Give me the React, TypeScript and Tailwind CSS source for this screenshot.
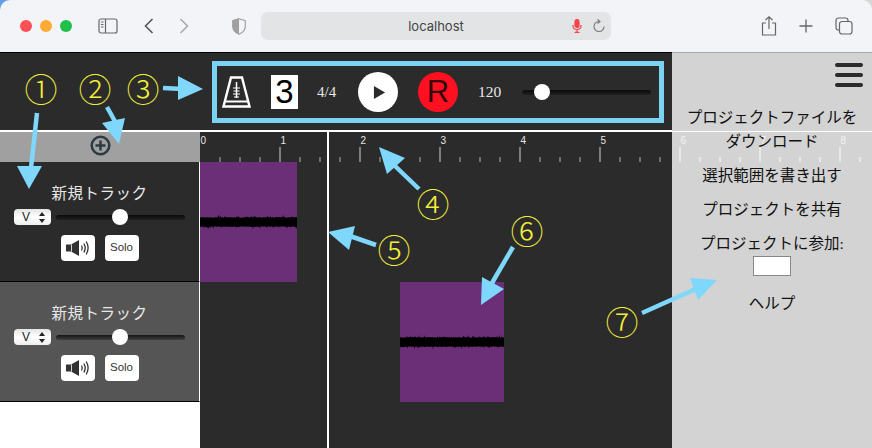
import React from "react";

const serif = "font-['Liberation_Serif','Noto_Sans_CJK_JP',serif]";
const sans = "font-['Liberation_Sans',sans-serif]";

function wavePath(width: number, seed: number) {
  let s = seed;
  const rnd = () => {
    s = (s * 9301 + 49297) % 233280;
    return s / 233280;
  };
  let top = "M0 8";
  let bottom = "";
  for (let x = 0; x <= width; x += 0.5) {
    const spike = rnd() > 0.92 ? 1 + rnd() * 1.5 : 0;
    top += ` L${x} ${(8 - 4.2 - rnd() * 1.0 - spike).toFixed(1)}`;
    const spike2 = rnd() > 0.92 ? 1 + rnd() * 1.5 : 0;
    bottom = ` L${x} ${(8 + 4.2 + rnd() * 1.0 + spike2).toFixed(1)}` + bottom;
  }
  return top + bottom + " Z";
}

function Clip({ className, width, seed }: { className: string; width: number; seed: number }) {
  return (
    <div className={`h-[120px] bg-[#6b2f78] flex items-center ${className}`}>
      <svg width={width} height="16" viewBox={`0 0 ${width} 16`} preserveAspectRatio="none">
        <path d={wavePath(width, seed)} fill="#000" />
      </svg>
    </div>
  );
}

function Slider({ width, thumb }: { width: string; thumb: string }) {
  return (
    <div className={`relative h-4 flex items-center ${width}`}>
      <div className="h-[5px] w-full rounded-full bg-gradient-to-b from-[#000000c0] to-[#00000040]" />
      <div className={`absolute top-0 w-4 h-4 rounded-full bg-white ${thumb}`} />
    </div>
  );
}

function Track({ bg }: { bg: string }) {
  return (
    <div className={`h-[120px] flex flex-col items-center border-b border-b-black border-r border-r-white ${bg}`}>
      <div className={`mt-[21px] h-[22px] leading-[22px] text-[15.5px] tracking-[0.5px] text-[#e8e8e8] ${serif}`}>新規トラック</div>
      <div className="mt-[4px] flex items-center gap-[5px] w-[171px]">
        <div className={`w-[37px] h-4 rounded-[4px] bg-gradient-to-b from-[#e4e4e4] via-white to-[#eee] flex items-center justify-between pl-[8px] pr-[6px] text-[12px] text-[#222] ${sans}`}>
          <span>V</span>
          <svg width="6" height="11" viewBox="0 0 6 11" fill="#222">
            <path d="M3 0 L6 4 H0 Z M3 11 L0 7 H6 Z" />
          </svg>
        </div>
        <Slider width="w-[129px]" thumb="left-[56px]" />
      </div>
      <div className="mt-[10px] flex gap-[10px]">
        <div className="w-[34px] h-[26px] rounded-[4px] bg-white flex items-center justify-center">
          <svg width="26" height="18" viewBox="0 0 26 18" fill="none">
            <path d="M1 5.5 H6 L14 1 V17 L6 12.5 H1 Z" fill="#333" />
            <path d="M6.5 5.5 V12.5" stroke="#fff" strokeWidth="0.8" />
            <path d="M16.5 6.5 Q18 9 16.5 11.5" stroke="#333" strokeWidth="1.3" />
            <path d="M18.8 4.5 Q21.6 9 18.8 13.5" stroke="#333" strokeWidth="1.3" />
            <path d="M21.2 2.5 Q25 9 21.2 15.5" stroke="#333" strokeWidth="1.3" />
          </svg>
        </div>
        <div className={`w-[34px] h-[26px] rounded-[4px] bg-white flex items-center justify-center text-[11.5px] text-[#333] ${sans}`}>Solo</div>
      </div>
    </div>
  );
}

function Ruler() {
  const ticks = [];
  for (let i = 1; i <= 33; i++) {
    const x = i * 20;
    const major = i % 4 === 0;
    const inPanel = x >= 472;
    ticks.push(
      <rect
        key={i}
        x={x - 0.75}
        y={major ? 16 : 26}
        width="1.5"
        height={major ? 15 : 5}
        fill={inPanel ? "#f0f0f0" : major ? "#9a9a9a" : "#858585"}
      />
    );
  }
  const labels = [0, 1, 2, 3, 4, 5, 6, 7, 8];
  return (
    <svg width="672" height="31" className="absolute left-0 top-0 overflow-visible">
      <rect x="0" y="0" width="672" height="1" fill="#fff" />
      {ticks}
      {labels.map((n) => (
        <text
          key={n}
          x={n * 80 + 0.5}
          y="13"
          fontSize="10"
          fontFamily="Liberation Sans"
          fill={n * 80 >= 472 ? "#f4f4f4" : "#e6e6e6"}
        >
          {n}
        </text>
      ))}
    </svg>
  );
}

const marks = [
  { t: "①", c: "left-[41px] top-[88px]" },
  { t: "②", c: "left-[95px] top-[88px]" },
  { t: "③", c: "left-[143px] top-[88px]" },
  { t: "④", c: "left-[433px] top-[203px]" },
  { t: "⑤", c: "left-[394px] top-[249px]" },
  { t: "⑥", c: "left-[527px] top-[230px]" },
  { t: "⑦", c: "left-[622px] top-[321px]" },
];

const arrows = [
  { l: "37,113 31,168", h: "17,166 42,166 29,189" },
  { l: "107,107 117,125", h: "102,123 125,118 119,144" },
  { l: "163,88 183,89", h: "178,76 203,89 178,100" },
  { l: "419,189 395,166", h: "379,147 405,158 387,174" },
  { l: "376,245 350,236", h: "328,232 355,226 349,250" },
  { l: "513,247 492,283", h: "482,277 504,289 481,305" },
  { l: "642,313 700,287", h: "690,278 717,280 698,300" },
];

function Annotations() {
  return (
    <>
      <svg width="872" height="448" className="absolute left-0 top-0 z-20 pointer-events-none">
        {arrows.map((a, i) => (
          <g key={i}>
            <polyline points={a.l} stroke="#7fd8fb" strokeWidth="4.5" fill="none" />
            <polygon points={a.h} fill="#7fd8fb" />
          </g>
        ))}
      </svg>
      {marks.map((m) => (
        <span
          key={m.t}
          className={`absolute z-20 -translate-x-1/2 -translate-y-1/2 text-[33px] leading-none text-[#f4ee3a] font-['Noto_Sans_CJK_JP',sans-serif] font-light ${m.c}`}
        >
          {m.t}
        </span>
      ))}
    </>
  );
}

function BrowserChrome() {
  return (
    <div className="h-[52px] rounded-t-[10px] bg-[#f3f4f7] flex items-center">
      <div className="ml-[20px] flex gap-[8px]">
        <div className="w-3 h-3 rounded-full bg-[#fb5058]" />
        <div className="w-3 h-3 rounded-full bg-[#fdab33]" />
        <div className="w-3 h-3 rounded-full bg-[#1fc14a]" />
      </div>
      <svg className="ml-[26px]" width="20" height="16" viewBox="0 0 20 16" fill="none" stroke="#666" strokeWidth="1.2">
        <rect x="1" y="1" width="18" height="14" rx="2" />
        <path d="M7.5 1 V15" />
        <path d="M3 4 H5.5 M3 6.5 H5.5 M3 9 H5.5" strokeWidth="1" />
      </svg>
      <svg className="ml-[26px]" width="10" height="16" viewBox="0 0 10 16" fill="none" stroke="#555" strokeWidth="1.6">
        <path d="M8.5 1 L1.5 8 L8.5 15" />
      </svg>
      <svg className="ml-[25px]" width="10" height="16" viewBox="0 0 10 16" fill="none" stroke="#aaa" strokeWidth="1.6">
        <path d="M1.5 1 L8.5 8 L1.5 15" />
      </svg>
      <svg className="ml-[43px]" width="14" height="17" viewBox="0 0 14 17">
        <path d="M7 0.7 L13.3 2.6 V8 C13.3 12 10.5 14.8 7 16.3 C3.5 14.8 0.7 12 0.7 8 V2.6 Z" fill="#f3f4f7" stroke="#a0a0a0" strokeWidth="1.2" />
        <path d="M7 0.7 L0.7 2.6 V8 C0.7 12 3.5 14.8 7 16.3 Z" fill="#a0a0a0" />
      </svg>
      <div className={`ml-[15px] w-[350px] h-[28px] pt-[1px] rounded-[7px] bg-[#e3e4e6] flex items-center relative justify-center text-[13px] text-[#444] font-['Inter',sans-serif]`}>
        localhost
        <div className="absolute right-[6px] top-[7px] flex items-center gap-[11px]">
          <svg width="10" height="14" viewBox="0 0 10 14" fill="none" stroke="#f4444a" strokeWidth="1.2">
            <rect x="3" y="0.5" width="4" height="8" rx="2" fill="#f4444a" />
            <path d="M1 6 V7 C1 9.5 3 10.5 5 10.5 C7 10.5 9 9.5 9 7 V6 M5 10.5 V13 M2.5 13.3 H7.5" />
          </svg>
          <svg width="12" height="14" viewBox="0 0 12 14" fill="none" stroke="#777" strokeWidth="1.1">
            <path d="M6 2.5 A5 5 0 1 0 11 7.5" />
            <path d="M4.5 0.5 L7 2.5 L4.5 4.5" />
          </svg>
        </div>
      </div>
      <svg className="ml-[150px]" width="16" height="20" viewBox="0 0 16 20" fill="none" stroke="#666" strokeWidth="1.2">
        <path d="M5 7 H1.5 V19 H14.5 V7 H11" />
        <path d="M8 13 V1 M4.5 4 L8 0.8 L11.5 4" />
      </svg>
      <svg className="ml-[22px]" width="14" height="14" viewBox="0 0 14 14" stroke="#666" strokeWidth="1.3">
        <path d="M7 0.5 V13.5 M0.5 7 H13.5" />
      </svg>
      <svg className="ml-[22px]" width="18" height="18" viewBox="0 0 18 18" fill="#f3f4f7" stroke="#666" strokeWidth="1.2">
        <rect x="1" y="1" width="12" height="12" rx="2.5" />
        <rect x="4.5" y="4.5" width="12.5" height="12.5" rx="2.5" />
      </svg>
    </div>
  );
}

function Transport() {
  return (
    <div className="h-[79px] bg-[#2b2b2b] border-t border-t-black border-b border-b-white flex items-center pl-[212px] pt-[1px]">
      <div className="w-[452px] h-[62px] border-[5px] border-[#7bd3f3] flex items-center pl-[5px]">
        <svg width="29" height="32" viewBox="0 0 29 32" fill="none" stroke="#fff" strokeWidth="2.4">
          <path d="M9 1.5 H20 L27.5 30.5 H1.5 Z" />
          <path d="M3 25.5 H26" strokeWidth="2" />
          <path d="M14.5 6 V22" strokeWidth="1.5" />
          <path d="M11 12 H18 M11.5 15 H17.5 M11 18 H18 M12 21 H17" strokeWidth="1.1" />
        </svg>
        <div className={`ml-[20px] w-[27px] h-[34px] bg-white flex items-center justify-center text-[33px] text-black ${sans}`}>3</div>
        <div className={`ml-[19px] w-[21px] text-[15px] text-[#e8e8e8] ${serif}`}>4/4</div>
        <div className="ml-[20px] w-10 h-10 rounded-full bg-white flex items-center justify-center">
          <svg className="ml-[3px]" width="13" height="15" viewBox="0 0 14 16" fill="#2b2b2b">
            <path d="M1 1 L13 8 L1 15 Z" />
          </svg>
        </div>
        <div className={`ml-[20px] w-10 h-10 rounded-full bg-[#ff1020] flex items-center justify-center text-[31px] text-[#33070c] ${sans}`}>R</div>
        <div className={`ml-[20px] w-[24px] text-[15.5px] text-[#e8e8e8] ${serif}`}>120</div>
        <div className="ml-[20px]">
          <Slider width="w-[129px]" thumb="left-[12px]" />
        </div>
      </div>
    </div>
  );
}

function Panel() {
  const cls = `text-[15.5px] leading-[24px] text-[#111] text-center ${serif}`;
  return (
    <aside className="w-[200px] bg-[#d3d3d3] border-t border-t-[#aaa] flex flex-col items-center">
      <div className="self-end mt-[10px] mr-[9px] w-[28px] flex flex-col gap-[6px]">
        <div className="h-[4px] rounded-full bg-[#2b2b2b]" />
        <div className="h-[4px] rounded-full bg-[#2b2b2b]" />
        <div className="h-[4px] rounded-full bg-[#2b2b2b]" />
      </div>
      <div className={`mt-[19px] ${cls}`}>
        プロジェクトファイルを
        <br />
        ダウンロード
      </div>
      <div className={`mt-[10px] ${cls}`}>選択範囲を書き出す</div>
      <div className={`mt-[10px] ${cls}`}>プロジェクトを共有</div>
      <div className={`mt-[10px] ${cls}`}>プロジェクトに参加:</div>
      <div className="w-[38px] h-[20px] bg-white border border-[#888]" />
      <div className={`mt-[16px] ${cls}`}>ヘルプ</div>
    </aside>
  );
}

export default function App() {
  return (
    <div className="relative w-[872px] h-[448px] overflow-hidden flex flex-col bg-gradient-to-r from-[#5f9fe6] to-[#d8d8d8]">
      <BrowserChrome />
      <div className="flex h-[396px]">
        <div className="w-[672px] relative z-10 flex flex-col">
          <Transport />
          <div className="flex flex-1">
            <div className="w-[200px] bg-white flex flex-col">
              <div className="h-[31px] pb-[3px] border-t border-t-white bg-[#a0a0a0] flex items-center justify-center">
                <svg width="21" height="21" viewBox="0 0 21 21" fill="none" stroke="#2c3a42" strokeWidth="2.5">
                  <circle cx="10.5" cy="10.5" r="8.8" />
                  <path d="M10.5 5.5 V15.5 M5.5 10.5 H15.5" />
                </svg>
              </div>
              <Track bg="bg-[#2b2b2b]" />
              <Track bg="bg-[#555555]" />
            </div>
            <div className="relative w-[472px] bg-[#2b2b2b]">
              <Ruler />
              <div className="pt-[31px] flex flex-col">
                <Clip className="w-[97px]" width={97} seed={17} />
                <Clip className="ml-[200px] w-[104px]" width={104} seed={91} />
              </div>
              <div className="absolute left-[127px] top-0 bottom-0 w-[2px] bg-white" />
            </div>
          </div>
        </div>
        <Panel />
      </div>
      <Annotations />
    </div>
  );
}
